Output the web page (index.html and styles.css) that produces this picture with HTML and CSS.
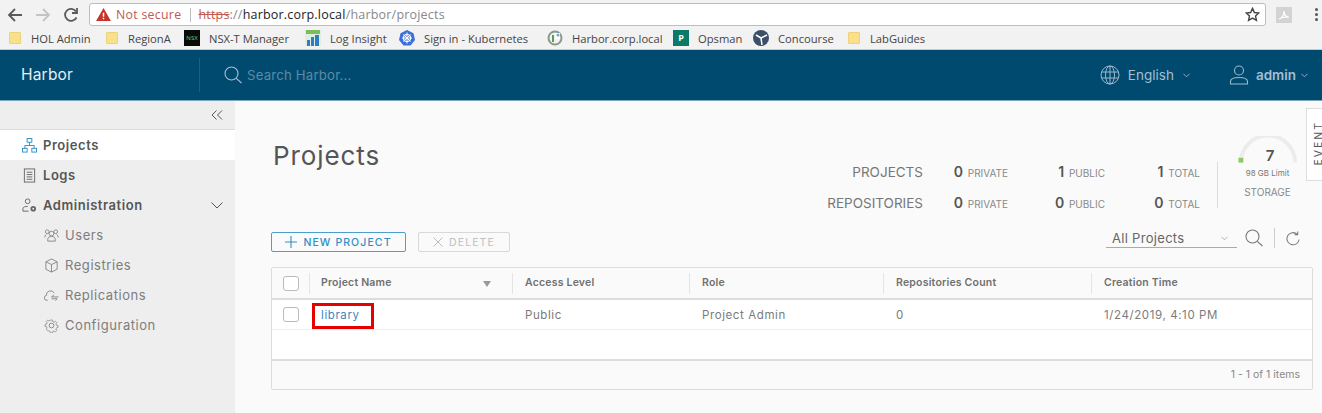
FILE: index.html
```html
<!DOCTYPE html>
<html lang="en">
<head>
    <meta charset="UTF-8">
    <title>Harbor</title>
    <link rel="stylesheet" href="styles.css">
</head>
<body>
<div class="toolbar">
    <svg class="nav-icon" viewBox="0 0 16 16"><path d="M15 8H2M8 2L2 8l6 6" fill="none" stroke="#5a5a5a" stroke-width="1.8"/></svg>
    <svg class="nav-icon" viewBox="0 0 16 16"><path d="M1 8h13M8 2l6 6-6 6" fill="none" stroke="#c4c4c4" stroke-width="1.8"/></svg>
    <svg class="nav-icon" viewBox="0 0 16 16"><path d="M13.5 10.5A6 6 0 1 1 13 4.5M14 1v5H9" fill="none" stroke="#5a5a5a" stroke-width="1.8"/></svg>
    <div class="omnibox">
        <svg class="warn" viewBox="0 0 16 14"><path d="M8 0l8 14H0z" fill="#c5352b"/><path d="M7.2 5h1.6v4.5H7.2zM7.2 10.5h1.6V12H7.2z" fill="#fff"/></svg>
        <span class="not-secure">Not secure</span>
        <span class="url"><s class="scheme">https</s><span class="dim">://</span>harbor.corp.local<span class="dim">/harbor/projects</span></span>
        <svg class="star" viewBox="0 0 16 16"><path d="M8 1.5l2 4.4 4.7.5-3.5 3.2 1 4.7L8 11.9l-4.2 2.4 1-4.7L1.300 6.400 6 5.900z" fill="none" stroke="#444" stroke-width="1.500"/></svg>
    </div>
    <svg class="pdf" viewBox="0 0 16 16"><rect width="16" height="16" fill="#d3d3d3"/><path d="M3 12c3-1 5-4 5-8 0 4 2 6 5 6-3 0-7 0-10 2z" fill="none" stroke="#fff" stroke-width="1.200"/></svg>
    <div class="menu-dots"><i></i><i></i><i></i></div>
</div>

<div class="bookmarks">
    <div class="bm"><span class="folder"></span>HOL Admin</div>
    <div class="bm"><span class="folder"></span>RegionA</div>
    <div class="bm"><span class="nsx">NSX</span>NSX-T Manager</div>
    <div class="bm"><svg class="bm-icon" viewBox="0 0 16 16"><rect width="16" height="16" fill="#dfeee0"/><path d="M1 0h14v4H1z" fill="#7cbf5a"/><path d="M2 10h3v6H2zM6 7h3v9H6zM10 5h4v11h-4z" fill="#2d7fc1"/></svg>Log Insight</div>
    <div class="bm"><svg class="bm-icon" viewBox="0 0 16 16"><path d="M8 0l6.500 3.200L16 10l-4.500 5.500h-7L0 10l1.500-6.800z" fill="#3c6fd8"/><circle cx="8" cy="8" r="3.500" fill="none" stroke="#fff" stroke-width="1.200"/><path d="M8 2.500v11M3 8h10M4.500 4.500l7 7M11.500 4.500l-7 7" stroke="#fff"/></svg>Sign in - Kubernetes</div>
    <div class="bm"><svg class="bm-icon" viewBox="0 0 16 16"><circle cx="8" cy="8" r="6.500" fill="none" stroke="#8a9a8a" stroke-width="2"/><path d="M8 3h5v6H8z" fill="#fff"/><path d="M6 5v7" stroke="#5d9b55" stroke-width="2"/><circle cx="11" cy="5" r="1.500" fill="#6aa5d8"/></svg>Harbor.corp.local</div>
    <div class="bm"><span class="opsman">P</span>Opsman</div>
    <div class="bm"><svg class="bm-icon" viewBox="0 0 16 16"><circle cx="8" cy="8" r="8" fill="#3d4f68"/><path d="M8 8L3 5M8 8l6-3M8 8l1 7" stroke="#fff" stroke-width="1.500"/></svg>Concourse</div>
    <div class="bm"><span class="folder"></span>LabGuides</div>
</div>

<header class="topbar">
    <div class="brand">Harbor</div>
    <div class="search">
        <svg class="search-icon" viewBox="0 0 18 18"><circle cx="7.500" cy="7.500" r="6.500" fill="none" stroke="#a9c0cf" stroke-width="1.100"/><path d="M12.300 12.300L17.500 17" stroke="#a9c0cf" stroke-width="1.100"/></svg>
        <span>Search Harbor...</span>
    </div>
    <div class="lang">
        <svg class="globe" viewBox="0 0 20 20" fill="none" stroke="#9db9cb"><circle cx="10" cy="10" r="9"/><ellipse cx="10" cy="10" rx="4.500" ry="9"/><path d="M10 1v18M1.500 7h17M1.500 13h17"/></svg>
        <span>English</span>
        <svg class="caret" viewBox="0 0 8 5"><path d="M.5.5L4 4 7.500.5" fill="none" stroke="#9db9cb"/></svg>
    </div>
    <div class="user">
        <svg class="person" viewBox="0 0 20 20" fill="none" stroke="#9db9cb" stroke-width="1.100"><circle cx="10" cy="5.500" r="4.500"/><path d="M1.500 19v-2.500c0-2.500 3-4 8.500-4s8.500 1.500 8.500 4V19z"/></svg>
        <span>admin</span>
        <svg class="caret" viewBox="0 0 8 5"><path d="M.5.5L4 4 7.500.5" fill="none" stroke="#9db9cb"/></svg>
    </div>
</header>

<div class="layout">
    <nav class="sidebar">
        <div class="collapse">
            <svg viewBox="0 0 12 10" class="collapse-icon"><path d="M5.500.5L1 5l4.500 4.500M11 .5L6.500 5 11 9.500" fill="none" stroke="#555"/></svg>
        </div>
        <a class="nav-item active">
            <svg class="nav-svg" viewBox="0 0 16 16" fill="none" stroke="#2f8fc7"><rect x="5.500" y=".5" width="5" height="4"/><rect x=".5" y="11" width="5" height="4"/><rect x="10.500" y="11" width="5" height="4"/><path d="M8 4.500V8M3 11V8h10v3"/></svg>
            Projects
        </a>
        <a class="nav-item">
            <svg class="nav-svg" viewBox="0 0 16 16" fill="none" stroke="#666"><rect x="2.500" y="1" width="11" height="14"/><path d="M5 4.500h6M5 7h6M5 9.500h6M5 12h6"/></svg>
            Logs
        </a>
        <a class="nav-item">
            <svg class="nav-svg" viewBox="0 0 16 16" fill="none" stroke="#666"><circle cx="6" cy="3.500" r="2.500"/><path d="M1 14v-2.500C1 9.500 3 9 6 9M1 14h6"/><circle cx="12" cy="11.500" r="2" stroke-width="2"/></svg>
            Administration
            <svg class="nav-caret" viewBox="0 0 12 7"><path d="M.5.5L6 6 11.500.5" fill="none" stroke="#555"/></svg>
        </a>
        <a class="nav-sub">
            <svg class="nav-svg" viewBox="0 0 16 16" fill="none" stroke="#888"><circle cx="8" cy="6" r="2.500"/><circle cx="3.500" cy="4" r="2"/><circle cx="12.500" cy="4" r="2"/><path d="M4 14v-2c0-2 2-3 4-3s4 1 4 3v2zM1 10V8.500L2.500 7M15 10V8.500L13.500 7"/></svg>
            Users
        </a>
        <a class="nav-sub">
            <svg class="nav-svg" viewBox="0 0 16 16" fill="none" stroke="#888"><path d="M8 1l6 3v8l-6 3-6-3V4zM2 4l6 3 6-3M8 7v8"/></svg>
            Registries
        </a>
        <a class="nav-sub">
            <svg class="nav-svg" viewBox="0 0 16 16" fill="none" stroke="#888"><path d="M4 13H3a2.500 2.500 0 0 1-.5-5A4.500 4.500 0 0 1 11 5.500M8 9.500h7.500M8 9.500l2.500-2M8 11.500h6M14 11.500l-2 2"/></svg>
            Replications
        </a>
        <a class="nav-sub">
            <svg class="nav-svg" viewBox="0 0 16 16" fill="none" stroke="#888"><circle cx="8" cy="8" r="2.500"/><path d="M6.800 1h2.400l.4 2 1.700.7 1.700-1.100 1.700 1.700-1.100 1.700.7 1.700 2 .4v2.400l-2 .4-.7 1.700 1.100 1.700-1.700 1.700-1.700-1.100-1.700.7-.4 2H6.800l-.4-2-1.700-.7L3 14.600l-1.700-1.700 1.100-1.700-.7-1.700-2-.4V6.700l2-.4.7-1.700L1.300 2.900 3 1.200l1.700 1.100 1.700-.7z" transform="translate(1.300 1.300) scale(.84)"/></svg>
            Configuration
        </a>
    </nav>

    <main class="content">
        <div class="event-tab"><span>EVENT</span></div>

        <div class="summary">
            <h1 class="title">Projects</h1>
            <div class="stats">
                <div class="stat-label">PROJECTS</div>
                <div class="stat"><b>0</b> PRIVATE</div>
                <div class="stat"><b>1</b> PUBLIC</div>
                <div class="stat"><b>1</b> TOTAL</div>
                <div class="stat-label">REPOSITORIES</div>
                <div class="stat"><b>0</b> PRIVATE</div>
                <div class="stat"><b>0</b> PUBLIC</div>
                <div class="stat"><b>0</b> TOTAL</div>
            </div>
            <div class="storage">
                <svg class="gauge" viewBox="0 0 62 28"><path d="M3 27A28 28 0 0 1 59 27" fill="none" stroke="#ececec" stroke-width="4"/><path d="M3 27v-5" stroke="#8ccb5e" stroke-width="5"/></svg>
                <div class="gauge-num">7</div>
                <div class="gauge-limit">98 GB Limit</div>
                <div class="gauge-name">STORAGE</div>
            </div>
        </div>

        <div class="actions">
            <button class="btn btn-primary"><svg viewBox="0 0 12 12" class="btn-icon"><path d="M6 0v12M0 6h12" stroke="#2f8fc7" stroke-width="1.100"/></svg>NEW PROJECT</button>
            <button class="btn btn-off"><svg viewBox="0 0 10 10" class="btn-icon-x"><path d="M.5.5l9 9M9.500.5l-9 9" stroke="#bbb"/></svg>DELETE</button>
            <div class="filter">
                <div class="select">All Projects<svg class="caret" viewBox="0 0 8 5"><path d="M.5.5L4 4 7.500.5" fill="none" stroke="#aaa"/></svg></div>
                <svg class="tool-search" viewBox="0 0 18 18"><circle cx="7.500" cy="7.500" r="6.500" fill="none" stroke="#777" stroke-width="1.100"/><path d="M12.300 12.300L17.500 17" stroke="#777" stroke-width="1.100"/></svg>
                <span class="tool-sep"></span>
                <svg class="tool-refresh" viewBox="0 0 16 16"><path d="M14 9a6.500 6.500 0 1 1-2-5.500M12.500 .5v3.500H9" fill="none" stroke="#777" stroke-width="1.100"/></svg>
            </div>
        </div>

        <div class="grid">
            <div class="row head">
                <div class="c-check"><span class="box"></span></div>
                <div class="cell c-name">Project Name<svg class="sort" viewBox="0 0 8 6"><path d="M0 0h8L4 6z" fill="#999"/></svg></div>
                <div class="cell c-access">Access Level</div>
                <div class="cell c-role">Role</div>
                <div class="cell c-count">Repositories Count</div>
                <div class="cell c-time">Creation Time</div>
            </div>
            <div class="row body">
                <div class="c-check"><span class="box"></span></div>
                <div class="cell c-name"><a class="link">library</a></div>
                <div class="cell c-access">Public</div>
                <div class="cell c-role">Project Admin</div>
                <div class="cell c-count">0</div>
                <div class="cell c-time">1/24/2019, 4:10 PM</div>
            </div>
            <div class="empty"></div>
            <div class="foot">1 - 1 of 1 items</div>
        </div>
    </main>
</div>
</body>
</html>
```

FILE: styles.css
```css
* {
    box-sizing: border-box;
}

html, body {
    margin: 0;
    padding: 0;
    height: 413px;
    overflow: hidden;
}

body {
    font-family: Inter, "Noto Sans", sans-serif;
    color: #666;
    background: #fafafa;
}

/* browser chrome */
.toolbar {
    height: 29px;
    background: #f2f2f2;
    display: flex;
    align-items: center;
    padding-left: 7px;
}

.nav-icon {
    width: 16px;
    height: 16px;
    margin-right: 12px;
}

.omnibox {
    width: 1177px;
    height: 23px;
    margin-left: -2px;
    background: #fff;
    border: 1px solid #bdbdbd;
    border-radius: 3px;
    display: flex;
    align-items: center;
    padding-left: 6px;
    font-family: "Open Sans", sans-serif;
    font-size: 12.500px;
}

.warn {
    width: 15px;
    height: 13px;
    margin-right: 5px;
}

.not-secure {
    color: #c0594f;
    font-size: 12.300px;
    letter-spacing: .3px;
    padding-right: 9px;
    border-right: 1px solid #bbb;
    line-height: 14px;
    margin-right: 7px;
}

.url {
    color: #222;
    letter-spacing: .2px;
}

.url .dim {
    color: #888;
}

.scheme {
    color: #c0594f;
}

.star {
    width: 15px;
    height: 15px;
    margin-left: auto;
    margin-right: 5px;
}

.pdf {
    width: 16px;
    height: 16px;
    margin-left: 10px;
}

.menu-dots {
    margin-left: 23px;
    display: flex;
    flex-direction: column;
    gap: 2px;
}

.menu-dots i {
    display: block;
    width: 3px;
    height: 3px;
    background: #555;
    border-radius: 50%;
}

.bookmarks {
    height: 21px;
    background: #f2f2f2;
    border-bottom: 1px solid #ccc;
    display: grid;
    grid-template-columns: 97px 78px 121px 94px 148px 126px 80px 95px 100px;
    padding: 0 0 2px 9px;
    font-family: "Open Sans", sans-serif;
    font-size: 11.200px;
    color: #444;
    white-space: nowrap;
}

.bm {
    display: flex;
    align-items: center;
    overflow: hidden;
}

.folder {
    width: 12px;
    height: 12px;
    margin-right: 10px;
    background: #fbe08a;
    border: 1px solid #ecd27c;
    border-radius: 1px;
}

.bm-icon, .nsx, .opsman {
    width: 16px;
    height: 16px;
    margin-right: 9px;
    flex: none;
}

.nsx {
    background: #0a0a0a;
    color: #5d7;
    font-size: 6px;
    line-height: 16px;
    text-align: center;
}

.opsman {
    background: #0c7a68;
    color: #fff;
    font-size: 9px;
    font-weight: 700;
    line-height: 16px;
    text-align: center;
}

/* app header */
.topbar {
    height: 50px;
    background: #004a70;
    display: flex;
    align-items: center;
    color: #fff;
}

.brand {
    width: 200px;
    height: 34px;
    padding-left: 21px;
    font-size: 15.500px;
    line-height: 34px;
    border-right: 1px solid #1c5f82;
    letter-spacing: .2px;
    color: #e6eef3;
}

.search {
    display: flex;
    align-items: center;
    margin-left: 24px;
    color: #5d8aa4;
    font-size: 13.200px;
    letter-spacing: .2px;
}

.search-icon {
    width: 18px;
    height: 18px;
    margin-right: 5px;
}

.lang, .user {
    display: flex;
    align-items: center;
    color: #a4bfd0;
    font-size: 13.500px;
}

.lang {
    margin-left: auto;
}

.globe {
    width: 20px;
    height: 20px;
    margin-right: 8px;
}

.lang .caret {
    margin-left: 9px;
}

.user {
    margin-left: 39px;
    margin-right: 14px;
    font-weight: 600;
}

.person {
    width: 20px;
    height: 20px;
    margin-right: 7px;
}

.user .caret {
    margin-left: 5px;
}

.caret {
    width: 7px;
    height: 5px;
}

/* page */
.layout {
    display: flex;
    height: 313px;
}

.sidebar {
    width: 235px;
    flex: none;
    background: #eee;
    border-top: 1px solid #7ea6bd;
}

.collapse {
    height: 29px;
    border-bottom: 1px solid #ddd;
    display: flex;
    align-items: center;
    justify-content: flex-end;
    padding-right: 12px;
}

.collapse-icon {
    width: 12px;
    height: 10px;
}

.nav-item, .nav-sub {
    height: 30px;
    display: flex;
    align-items: center;
    font-size: 13px;
    letter-spacing: .55px;
}

.nav-item {
    padding-left: 22px;
    font-weight: 600;
    color: #565656;
}

.nav-item.active {
    background: #fff;
}

.nav-sub {
    padding-left: 44px;
    color: #7d7d7d;
}

.nav-svg {
    width: 15px;
    height: 15px;
    margin-right: 6px;
}

.nav-caret {
    width: 12px;
    height: 7px;
    margin-left: auto;
    margin-right: 12px;
}

.content {
    flex: 1;
    position: relative;
    padding: 0 10px 0 36px;
    border-top: 1px solid #7ea6bd;
    background: #fafafa;
}

.event-tab {
    position: absolute;
    top: 7px;
    right: 0;
    width: 17px;
    height: 73px;
    background: #fff;
    border: 1px solid #ddd;
    border-right: 0;
    overflow: hidden;
}

.event-tab span {
    position: absolute;
    left: 8px;
    bottom: 14px;
    writing-mode: vertical-rl;
    transform: rotate(180deg);
    font-size: 10.500px;
    line-height: 8px;
    letter-spacing: 2px;
    color: #555;
}

.summary {
    display: flex;
    height: 131px;
}

.title {
    margin: 42px 0 0 2px;
    font-size: 26px;
    font-weight: 400;
    line-height: 26px;
    color: #555;
    letter-spacing: .9px;
}

.stats {
    margin-left: auto;
    margin-top: 55px;
    display: grid;
    grid-template-columns: auto 85px 97px 95px;
    grid-auto-rows: 31px;
    align-items: center;
}

.stat-label {
    text-align: right;
    font-size: 13.500px;
    color: #777;
    padding: 0 0 0 20px;
}

.stat {
    text-align: right;
    font-size: 10px;
    color: #888;
    white-space: nowrap;
}

.stat b {
    font-size: 14px;
    font-weight: 600;
    color: #555;
    margin-right: 2px;
}

.storage {
    position: relative;
    width: 91px;
    margin-left: 17px;
    margin-right: 5px;
    margin-top: 61px;
    height: 46px;
    border-left: 1px solid #ddd;
    text-align: center;
    padding: 0 3px 0 12px;
}

.gauge {
    position: absolute;
    left: 20px;
    top: -26px;
    width: 60px;
    height: 28px;
}

.gauge-num {
    position: absolute;
    left: 0;
    right: -14px;
    top: -16px;
    font-size: 15px;
    font-weight: 600;
    color: #555;
}

.gauge-limit {
    margin-top: 6px;
    font-size: 8px;
    color: #777;
    white-space: nowrap;
}

.gauge-name {
    margin-top: 8px;
    font-size: 10px;
    color: #888;
}

.actions {
    display: flex;
    align-items: center;
    height: 20px;
}

.btn {
    height: 20px;
    background: transparent;
    border-radius: 2px;
    font-family: inherit;
    font-size: 10.500px;
    letter-spacing: 1.100px;
    padding: 0;
    display: flex;
    align-items: center;
    justify-content: center;
}

.btn-primary {
    width: 135px;
    border: 1px solid #4a9fcf;
    color: #2f8fc7;
    font-weight: 500;
}

.btn-off {
    width: 92px;
    margin-left: 12px;
    border: 1px solid #d8d8d8;
    color: #c0c0c0;
}

.btn-icon {
    width: 12px;
    height: 12px;
    margin-right: 6px;
}

.btn-icon-x {
    width: 10px;
    height: 10px;
    margin-right: 6px;
}

.filter {
    margin-left: auto;
    margin-top: -8px;
    display: flex;
    align-items: center;
}

.select {
    width: 131px;
    height: 19px;
    padding-left: 6px;
    padding-right: 9px;
    margin-top: 1px;
    border-bottom: 1px solid #aaa;
    display: flex;
    align-items: center;
    justify-content: space-between;
    font-size: 13px;
    letter-spacing: .3px;
    color: #666;
}

.tool-search {
    width: 18px;
    height: 18px;
    margin-left: 8px;
}

.tool-sep {
    width: 1px;
    height: 20px;
    margin: 0 11px;
    background: #ccc;
}

.tool-refresh {
    width: 15px;
    height: 15px;
    margin-right: 12px;
}

.grid {
    margin-top: 15px;
    width: 1042px;
    border: 1px solid #ddd;
    border-radius: 2px;
    background: #fff;
}

.row {
    display: grid;
    grid-template-columns: 37px 203px 177px 194px 208px 1fr;
    align-items: center;
}

.head {
    height: 32px;
    background: #fafafa;
    border-bottom: 2px solid #ddd;
    font-size: 10.500px;
    font-weight: 600;
    letter-spacing: .2px;
    color: #707070;
}

.body {
    height: 30px;
    border-bottom: 1px solid #eee;
    font-size: 11.500px;
    letter-spacing: .6px;
    color: #7b7b7b;
}

.c-check {
    display: flex;
    justify-content: flex-end;
    padding: 0 10px 0 12px;
}

.box {
    width: 16px;
    height: 15px;
    border: 1px solid #bbb;
    border-radius: 3px;
    background: #fff;
    flex: none;
}

.cell {
    padding-left: 13px;
    position: relative;
}

.head .cell {
    height: 21px;
    line-height: 19px;
    padding-left: 12px;
    border-left: 1px solid #e4e4e4;
}

.cell.c-name {
    padding-left: 12px;
}

.head .cell.c-name {
    padding-left: 11px;
}

.sort {
    position: absolute;
    right: 21px;
    top: 8px;
    width: 8px;
    height: 6px;
}

.link {
    color: #3f84bf;
    position: relative;
    display: block;
}

/* red note box drawn over the screenshot */
.link::after {
    content: "";
    box-sizing: border-box;
    position: absolute;
    left: -9px;
    top: -5px;
    width: 62px;
    height: 26px;
    border: 3px solid #e60000;
}

.empty {
    height: 31px;
    border-bottom: 2px solid #ddd;
}

.foot {
    height: 28px;
    background: #fafafa;
    font-size: 10.500px;
    line-height: 28px;
    text-align: right;
    padding-right: 12px;
    color: #888;
}
```
